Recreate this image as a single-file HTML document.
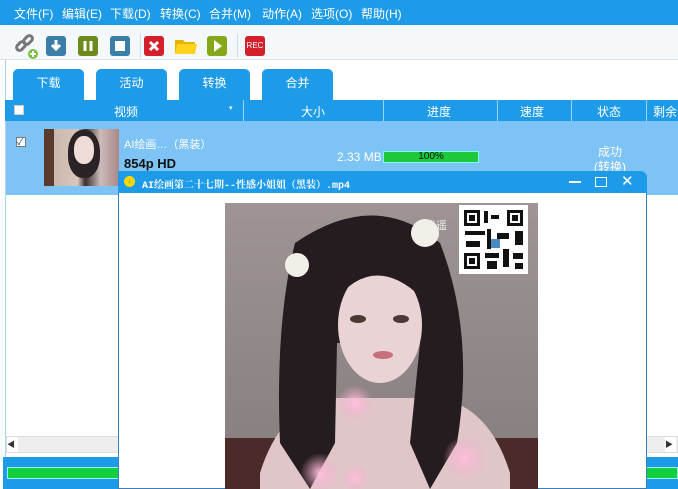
<!DOCTYPE html><html><head><meta charset="utf-8"><style>
*{margin:0;padding:0;box-sizing:border-box}
body{width:678px;height:489px;overflow:hidden;background:#fff;font-family:"Liberation Sans","Noto Sans CJK SC",sans-serif;position:relative}
.a{position:absolute}
.menu{left:0;top:0;width:678px;height:25px;background:#1e9be8;color:#fff;font-size:12px}
.menu span{position:absolute;top:5px}
.tb{left:0;top:25px;width:678px;height:35px;background:#f4f8fb;border-bottom:1px solid #dbe8f2}
.ic{position:absolute;top:36px;width:20px;height:20px;border-radius:3px}
.tab{top:69px;height:32px;width:71px;background:#1e9be8;border-radius:5px 5px 0 0;color:#fff;font-size:12px;text-align:center;line-height:28px}
.hdr{left:5px;top:100px;width:673px;height:21px;background:#1e9be8;color:#fff;font-size:12px}
.hdr span{position:absolute;top:3px}
.hdr i{position:absolute;top:0;width:1px;height:21px;background:#9fd3f6}
</style></head><body>
<div class="a menu">
<span style="left:14px">文件(F)</span><span style="left:62px">编辑(E)</span><span style="left:110px">下载(D)</span><span style="left:160px">转换(C)</span><span style="left:209px">合并(M)</span><span style="left:262px">动作(A)</span><span style="left:311px">选项(O)</span><span style="left:361px">帮助(H)</span>
</div>
<div class="a tb"></div>
<svg class="a" style="left:13px;top:34px" width="26" height="26"><g fill="none" stroke="#777" stroke-width="3"><rect x="3" y="9" width="10" height="6" rx="3" transform="rotate(-45 8 12)"/><rect x="10" y="3" width="10" height="6" rx="3" transform="rotate(-45 15 6)"/></g><circle cx="20" cy="20" r="5" fill="#7cc242"/><path d="M17 20h6M20 17v6" stroke="#fff" stroke-width="2"/></svg>
<div class="ic" style="left:46px;background:#3b7fa8"><svg width="20" height="20"><path d="M10 4v8M6 9l4 4 4-4" stroke="#fff" stroke-width="3" fill="none"/></svg></div>
<div class="ic" style="left:78px;background:#6e8a1c"><svg width="20" height="20"><path d="M7 5v10M13 5v10" stroke="#fff" stroke-width="3"/></svg></div>
<div class="ic" style="left:110px;background:#3b7fa8"><svg width="20" height="20"><rect x="5" y="5" width="10" height="10" fill="#fff"/></svg></div>
<div class="a" style="left:140px;top:34px;width:1px;height:24px;background:#cfdbe5"></div>
<div class="ic" style="left:144px;background:#d4202a"><svg width="20" height="20"><path d="M6 6l8 8M14 6l-8 8" stroke="#fff" stroke-width="3"/></svg></div>
<svg class="a" style="left:174px;top:37px" width="24" height="18"><path d="M1 3h8l2 2h10v12H1z" fill="#e4b600"/><path d="M3 7h20l-2 10H1z" fill="#ffd21e"/></svg>
<div class="ic" style="left:207px;background:#84a818"><svg width="20" height="20"><path d="M7 4l8 6-8 6z" fill="#fff"/></svg></div>
<div class="a" style="left:237px;top:34px;width:1px;height:24px;background:#cfdbe5"></div>
<div class="ic" style="left:245px;background:#d4202a;color:#fff;font-size:8px;line-height:20px;text-align:center">REC</div>
<div class="a" style="left:5px;top:60px;width:1px;height:429px;background:#a9d4f3"></div>
<div class="a tab" style="left:13px">下载</div>
<div class="a tab" style="left:96px">活动</div>
<div class="a tab" style="left:179px">转换</div>
<div class="a tab" style="left:262px">合并</div>
<div class="a hdr">
<span style="left:9px;top:5px;width:10px;height:10px;background:#fff;border:1px solid #ccc"></span>
<span style="left:109px">视频</span><span style="left:224px;font-size:7px;top:4px">▾</span><i style="left:238px"></i>
<span style="left:296px">大小</span><i style="left:378px"></i>
<span style="left:422px">进度</span><i style="left:492px"></i>
<span style="left:515px">速度</span><i style="left:566px"></i>
<span style="left:592px">状态</span><i style="left:641px"></i><span style="left:648px">剩余</span>
</div>
<div class="a" style="left:6px;top:121px;width:672px;height:74px;background:#7dc3f6"></div>
<div class="a" style="left:16px;top:137px;width:10px;height:10px;background:#fff;border:1px solid #777;font-size:9px;line-height:8px;color:#246">✓</div>
<div class="a" style="left:44px;top:129px;width:75px;height:57px;background:linear-gradient(90deg,#5a3a2c 0 10px,#c9b8ae 10px,#d8c6bd 45%,#3a2e2c 55%,#cbb 75%,#a88 100%)"></div>
<div class="a" style="left:68px;top:130px;width:32px;height:48px;border-radius:45%;background:#2a2224"></div>
<div class="a" style="left:74px;top:136px;width:20px;height:28px;border-radius:45%;background:#f0ddd8"></div>
<div class="a" style="left:124px;top:136px;color:#fff;font-size:11px">AI绘画…（黑装）</div>
<div class="a" style="left:124px;top:156px;font-size:13px;font-weight:bold;color:#111">854p HD</div>
<div class="a" style="left:337px;top:150px;color:#fff;font-size:12px">2.33 MB</div>
<div class="a" style="left:383px;top:151px;width:96px;height:12px;background:#1fc83a;border:1px solid #7fe;font-size:10px;text-align:center;line-height:10px;color:#111">100%</div>
<div class="a" style="left:594px;top:145px;color:#fff;font-size:12px;line-height:15px;text-align:center">成功<br>(转换)</div>
<div class="a" style="left:6px;top:436px;width:672px;height:17px;background:#eee;border:1px solid #ddd"></div>
<div class="a" style="left:7px;top:437px;width:11px;height:15px;background:#fff;font-size:8px;line-height:15px;color:#333">◀</div>
<div class="a" style="left:665px;top:437px;width:11px;height:15px;background:#fff;font-size:8px;line-height:15px;color:#333">▶</div>
<div class="a" style="left:3px;top:457px;width:675px;height:32px;background:#1e9be8"></div>
<div class="a" style="left:7px;top:467px;width:671px;height:12px;background:#12cf3e;border:1px solid #9ee"></div>
<div class="a" style="left:118px;top:171px;width:529px;height:318px;background:#fff;border:1px solid #3a7fb8;border-radius:0 7px 0 0"></div>
<div class="a" style="left:118px;top:171px;width:529px;height:22px;background:#1e9be8;border-radius:0 7px 0 0;color:#fff;font-size:10px;font-family:'Liberation Mono','Noto Serif CJK SC',monospace;font-weight:bold">
<span class="a" style="left:6px;top:5px;width:11px;height:11px;border-radius:50%;background:#ffd800;font-size:8px;line-height:11px;text-align:center;color:#2a7">↓</span>
<span class="a" style="left:24px;top:5px">AI绘画第二十七期--性感小姐姐（黑装）.mp4</span>
<span class="a" style="left:451px;top:10px;width:12px;height:2px;background:#fff"></span>
<span class="a" style="left:477px;top:6px;width:12px;height:10px;border:1.5px solid #fff"></span>
<span class="a" style="left:503px;top:1px;font-size:15px;font-weight:normal;font-family:'Liberation Sans'">✕</span>
</div>
<svg class="a" style="left:225px;top:203px" width="313" height="286">
<defs><radialGradient id="p"><stop offset="0" stop-color="#ffc0dc"/><stop offset="1" stop-color="#f3a9cc" stop-opacity="0"/></radialGradient>
<linearGradient id="bg" x1="0" y1="0" x2="0" y2="1"><stop offset="0" stop-color="#9e9494"/><stop offset="1" stop-color="#857c7d"/></linearGradient></defs>
<rect width="313" height="286" fill="url(#bg)"/>
<rect y="235" width="313" height="51" fill="#4b2a2a"/>
<path d="M35 270 Q55 205 105 195 L215 195 Q265 205 285 270 L285 286 L35 286Z" fill="#e0c6c8"/>
<path d="M70 40 Q150 -15 215 40 Q250 130 232 240 L205 286 L185 240 L195 140 L112 140 L110 240 L85 286 L55 240 Q50 120 70 40Z" fill="#241c1f"/>
<ellipse cx="155" cy="122" rx="42" ry="58" fill="#ead3d4"/>
<path d="M108 100 Q150 45 202 100 L205 60 Q150 20 105 60Z" fill="#241c1f"/>
<ellipse cx="133" cy="116" rx="8" ry="4" fill="#4a3a33"/><ellipse cx="176" cy="116" rx="8" ry="4" fill="#4a3a33"/>
<ellipse cx="158" cy="152" rx="10" ry="4" fill="#c7707a"/>
<circle cx="200" cy="30" r="14" fill="#f2efe8"/><circle cx="72" cy="62" r="12" fill="#f2efe8"/>
<circle cx="130" cy="200" r="18" fill="url(#p)"/><circle cx="240" cy="255" r="22" fill="url(#p)"/><circle cx="95" cy="270" r="20" fill="url(#p)"/><circle cx="130" cy="275" r="14" fill="url(#p)"/>
<rect x="234" y="2" width="69" height="69" fill="#fff"/>
<g fill="#111"><rect x="239" y="7" width="16" height="16"/><rect x="282" y="7" width="16" height="16"/><rect x="239" y="50" width="16" height="16"/></g>
<g fill="#fff"><rect x="242" y="10" width="10" height="10"/><rect x="285" y="10" width="10" height="10"/><rect x="242" y="53" width="10" height="10"/></g>
<g fill="#111"><rect x="244" y="12" width="6" height="6"/><rect x="287" y="12" width="6" height="6"/><rect x="244" y="55" width="6" height="6"/>
<rect x="259" y="8" width="4" height="12"/><rect x="266" y="12" width="8" height="4"/><rect x="240" y="28" width="20" height="4"/><rect x="262" y="26" width="4" height="20"/><rect x="272" y="30" width="12" height="6"/><rect x="290" y="28" width="8" height="14"/><rect x="241" y="38" width="14" height="6"/><rect x="260" y="50" width="14" height="5"/><rect x="278" y="46" width="6" height="18"/><rect x="288" y="50" width="10" height="6"/><rect x="262" y="58" width="10" height="8"/><rect x="290" y="60" width="8" height="6"/></g>
<rect x="266" y="36" width="9" height="9" fill="#4a8ac0"/>
<text x="200" y="26" font-size="11" fill="#eee" font-family="Noto Sans CJK SC">逍遥</text>
</svg>
</body></html>
